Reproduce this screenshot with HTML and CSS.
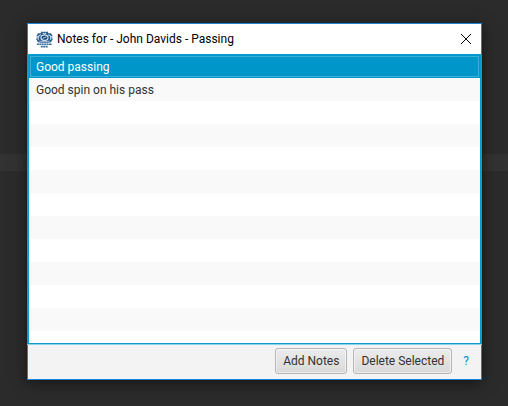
FILE: index.html
```
<!DOCTYPE html>
<html lang="en">
<head>
<meta charset="utf-8">
<title>Notes for - John Davids - Passing</title>
<link rel="stylesheet" href="styles.css">
</head>
<body>
<main class="window">
  <header class="titlebar">
    <svg class="logo" viewBox="0 0 16 16" aria-hidden="true">
      <path d="M5 .5l2 .5 1-.5 1 .5 2-.5.6 1.500 2.400.2 1.500 2.300-.3 2.200.6 1.300-1.800 2.500c-3.500.9-8.500.9-12 0L.2 8l.6-1.300-.3-2.200L2 2.200 4.400 2z" fill="#245c8f"/>
      <path d="M6.300 1.700L8 3l1.700-1.300M2.300 8.300C1.300 6 2.600 3.500 4.600 3.800M13.700 8.300c1-2.300-.3-4.800-2.300-4.500M.5 5l1.300.8M15.500 5l-1.300.8" fill="none" stroke="#dce8f2" stroke-width="1"/>
      <ellipse cx="8" cy="6.300" rx="3.300" ry="2.500" fill="#174a7c" stroke="#e4edf5" stroke-width="1"/>
      <path d="M6 7.200l4-1.800" stroke="#b9d0e3" stroke-width=".9"/>
      <path d="M3 9.500c3 .7 7 .7 10 0" fill="none" stroke="#d5e3ef" stroke-width=".7"/>
      <path d="M.8 12.500h14.400" stroke="#386e9c" stroke-width="1.500" stroke-dasharray="1.900 .4"/>
      <path d="M4.500 14.700h7" stroke="#386e9c" stroke-width="1.500" stroke-dasharray="1.900 .4"/>
    </svg>
    <h1 class="title">Notes for - John Davids - Passing</h1>
    <button class="close" type="button" aria-label="Close">
      <svg class="close-icon" viewBox="0 0 12 12" aria-hidden="true"><path d="M1 1l10 10M11 1L1 11"/></svg>
    </button>
  </header>
  <ul class="notes">
    <li class="note selected">Good passing</li>
    <li class="note">Good spin on his pass</li>
  </ul>
  <footer class="actions">
    <button class="button" type="button">Add Notes</button>
    <button class="button" type="button">Delete Selected</button>
    <a class="help" href="#">?</a>
  </footer>
</main>
</body>
</html>
```
FILE: styles.css
```
* {
  box-sizing: border-box;
}

body {
  display: flex;
  min-height: 100vh;
  margin: 0;
  padding: 23px 26px 26px 27px;
  background: linear-gradient(#2b2b2b 154px, #323232 154px, #323232 171px, #2b2b2b 171px);
  color: #323232;
  font: 12px/16px Roboto, "Open Sans", sans-serif;
}

.window {
  flex: 1;
  display: flex;
  flex-direction: column;
  border: 1px solid #1883d7;
  background: #f3f3f3;
  box-shadow: 0 3px 14px rgba(0, 0, 0, 0.5);
}

.titlebar {
  display: flex;
  align-items: center;
  height: 30px;
  padding-left: 8px;
  background: #fff;
  color: #000;
}

.logo {
  width: 17px;
  height: 17px;
  margin-right: 4px;
}

.title {
  flex: 1;
  margin: 0;
  font-size: 12px;
  font-weight: 400;
}

.close {
  display: grid;
  place-items: center;
  width: 30px;
  height: 30px;
  padding: 0;
  border: 0;
  background: none;
}

.close-icon {
  width: 12px;
  height: 12px;
  fill: none;
  stroke: #000;
}

.notes {
  flex: 1;
  margin: 0 -1px;
  padding: 0;
  border: solid #039ed3;
  border-width: 1px 2px;
  border-bottom-color: #0f95d0;
  box-shadow: 0 1px #8ad3ec;
  background: repeating-linear-gradient(#fff 0 23px, #f9f9f9 23px 46px);
  list-style: none;
}

.note {
  height: 23px;
  padding: 4px 7px;
}

.selected {
  background: #0096c9;
  color: #fff;
  outline: 1px solid #3daed6;
  outline-offset: -2px;
}

.actions {
  display: flex;
  align-items: center;
  justify-content: flex-end;
  gap: 6px;
  height: 35px;
  padding: 0 12px 2px;
}

.button {
  height: 26px;
  padding: 0 7px;
  border: 1px solid #b5b5b5;
  border-radius: 3px;
  background: linear-gradient(#ececec, #d9d9d9);
  box-shadow: inset 0 0 0 1px rgba(255, 255, 255, 0.5);
  color: #323232;
  font: inherit;
}

.help {
  margin-left: 5px;
  color: #0096c9;
  text-decoration: none;
}
```
